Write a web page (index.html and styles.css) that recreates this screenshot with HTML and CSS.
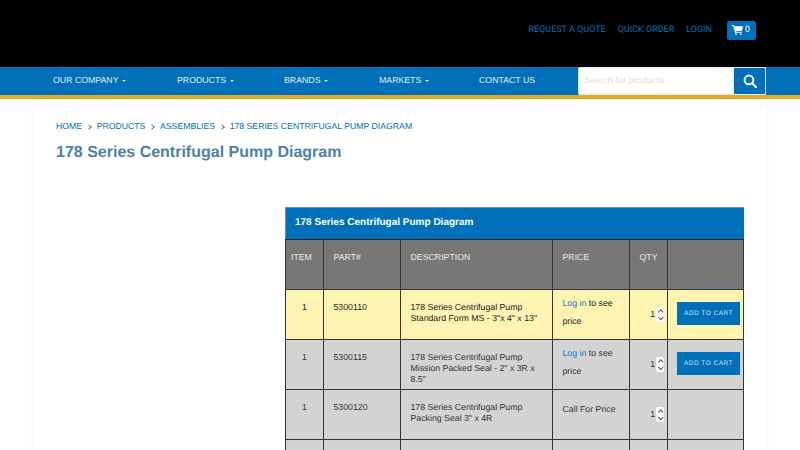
FILE: index.html
```html
<!DOCTYPE html>
<html lang="en">
<head>
<meta charset="utf-8">
<title>178 Series Centrifugal Pump Diagram</title>
<link rel="stylesheet" href="styles.css">
</head>
<body>
<header class="topbar">
  <a class="toplink" href="#">REQUEST A QUOTE</a>
  <a class="toplink" href="#">QUICK ORDER</a>
  <a class="toplink" href="#">LOGIN</a>
  <a class="cart" href="#">
    <svg class="cart-icon" viewBox="0 0 18 16" width="11" height="10"><path fill="#fff" d="M0 0h3.2l.6 2H18l-2 8H6l.4 1.6H16V13H5L2.2 1.6H0z"/><circle cx="6.6" cy="14.6" r="1.4" fill="#fff"/><circle cx="14.4" cy="14.6" r="1.4" fill="#fff"/></svg>
    <span>0</span>
  </a>
</header>
<nav class="mainnav">
  <ul class="menu">
    <li class="m1">OUR COMPANY <i class="caret"></i></li>
    <li class="m2">PRODUCTS <i class="caret"></i></li>
    <li class="m3">BRANDS <i class="caret"></i></li>
    <li class="m4">MARKETS <i class="caret"></i></li>
    <li class="m5">CONTACT US</li>
  </ul>
  <form class="search">
    <input class="search-input" type="text" placeholder="Search for products">
    <button class="search-btn" type="button" aria-label="Search">
      <svg viewBox="0 0 16 16" width="14" height="14"><circle cx="6.8" cy="6.8" r="5" fill="none" stroke="#fff" stroke-width="2.2"/><path d="M10.6 10.6l4.2 4.2" stroke="#fff" stroke-width="2.6" stroke-linecap="round"/></svg>
    </button>
  </form>
</nav>
<main class="card">
  <ol class="crumbs">
    <li><a href="#">HOME</a></li>
    <li class="sep"></li>
    <li><a href="#">PRODUCTS</a></li>
    <li class="sep"></li>
    <li><a href="#">ASSEMBLIES</a></li>
    <li class="sep"></li>
    <li><a href="#">178 SERIES CENTRIFUGAL PUMP DIAGRAM</a></li>
  </ol>
  <h1 class="title">178 Series Centrifugal Pump Diagram</h1>
  <table class="parts">
    <caption class="parts-cap">178 Series Centrifugal Pump Diagram</caption>
    <colgroup><col class="c1"><col class="c2"><col class="c3"><col class="c4"><col class="c5"><col class="c6"></colgroup>
    <thead>
      <tr><th class="th-item">ITEM</th><th>PART#</th><th>DESCRIPTION</th><th>PRICE</th><th>QTY</th><th></th></tr>
    </thead>
    <tbody>
      <tr class="hl">
        <td class="ctr">1</td><td>5300110</td><td>178 Series Centrifugal Pump Standard Form MS - 3"x 4" x 13"</td>
        <td class="price"><a href="#">Log in</a> to see price</td>
        <td class="qty"><span class="qwrap">1<span class="spin"><i class="up"></i><i class="dn"></i></span></span></td>
        <td class="act"><button class="add" type="button">ADD TO CART</button></td>
      </tr>
      <tr>
        <td class="ctr">1</td><td>5300115</td><td>178 Series Centrifugal Pump Mission Packed Seal - 2" x 3R x 8.5"</td>
        <td class="price"><a href="#">Log in</a> to see price</td>
        <td class="qty"><span class="qwrap">1<span class="spin"><i class="up"></i><i class="dn"></i></span></span></td>
        <td class="act"><button class="add" type="button">ADD TO CART</button></td>
      </tr>
      <tr>
        <td class="ctr">1</td><td>5300120</td><td>178 Series Centrifugal Pump Packing Seal 3" x 4R</td>
        <td class="price call">Call For Price</td>
        <td class="qty"><span class="qwrap">1<span class="spin"><i class="up"></i><i class="dn"></i></span></span></td>
        <td class="act"></td>
      </tr>
      <tr><td></td><td></td><td></td><td></td><td></td><td></td></tr>
    </tbody>
  </table>
</main>
</body>
</html>
```
FILE: styles.css
```css
* { box-sizing: border-box; }
html, body { margin: 0; padding: 0; height: 450px; overflow: hidden; background: #fff; }
body { font-family: "Liberation Sans", Arial, sans-serif; color: #222; text-rendering: geometricPrecision; }
a { text-decoration: none; }

.topbar { height: 67px; background: #000; display: flex; align-items: center; justify-content: flex-end; padding: 0 44px 7px 0; }
.toplink { font-family: Roboto, sans-serif; font-size: 9px; color: #0070ba; margin: 0 12px 0 0; }
.cart { margin-left: 3px; width: 29px; height: 19px; background: #0070ba; border-radius: 2px; color: #fff; display: flex; align-items: center; gap: 2px; padding-left: 5px; font-family: Roboto, sans-serif; font-size: 8.75px; }
.cart span { position: relative; top: -.5px; }

.mainnav { height: 32px; background: #0070ba; border-bottom: 4px solid #e5ac28; display: flex; }
.menu { list-style: none; margin: 0; padding: 0 0 2px; display: flex; height: 28px; align-items: center; width: 578px; font-size: 8.75px; color: #e4edf4; }
.m1 { margin-left: 53px; width: 124px; }
.m2 { width: 107px; }
.m3 { width: 95px; }
.m4 { width: 100px; }
.caret { display: inline-block; width: 0; height: 0; border-left: 2.5px solid transparent; border-right: 2.5px solid transparent; border-top: 2.5px solid #e4edf4; margin-left: 1.5px; vertical-align: middle; }

.search { display: flex; width: 188px; height: 28px; background: #fff; border-radius: 2px 0 0 2px; border: 1px solid #dfe8ef; }
.search-input { flex: 1; min-width: 0; border: 0; outline: 0; padding: 0 6px; font-family: Roboto, sans-serif; font-size: 9px; background: transparent; text-rendering: geometricPrecision; }
.search-input::placeholder { color: #e0e0e0; }
.search-btn { width: 32px; padding: 0; border: 0; border-left: 1px solid #dfe8ef; background: #0070ba; display: flex; align-items: center; justify-content: center; }

.card { width: 732px; height: 351px; margin: 0 auto; padding: 21px 22px 0; background: #fff; box-shadow: 0 0 6px rgba(0,0,0,.05); }
.crumbs { list-style: none; margin: 0; padding: 0; display: flex; align-items: center; font-size: 8.7px; line-height: 12px; }
.crumbs a { color: #0070ba; }
.sep { width: 14.6px; height: 12px; position: relative; }
.sep::after { content: ""; position: absolute; left: 4.5px; top: 4.5px; width: 3px; height: 3px; border-top: 1px solid #5d7f9c; border-right: 1px solid #5d7f9c; transform: rotate(45deg); }
.title { margin: 10px 0 0; font-size: 16px; line-height: 21px; font-weight: bold; color: #4f80aa; }

.parts { margin: 44px 0 0 229px; width: 459px; table-layout: fixed; border-collapse: collapse; font-size: 8.75px; border-left: 1px solid #999; }
.c1 { width: 38px; }
.c2 { width: 77px; }
.c3 { width: 152px; }
.c4 { width: 77px; }
.c5 { width: 38px; }
.c6 { width: 76px; }
.parts-cap { background: #0070ba; color: #fff; height: 32px; border-top: 1px solid #888; border-left: 1px solid #888; text-align: left; padding: 0 9px; font-size: 10px; line-height: 29px; font-weight: bold; }
.parts th { height: 50px; background: #777; color: #e8e8e8; font-weight: normal; font-size: 8.75px; text-align: left; vertical-align: top; padding: 12px 9.5px 0; border: 1px solid #333; border-top-color: #222; }
.parts th.th-item { padding: 12px 0 0 5px; }
.parts td { height: 50px; background: #d3d3d3; vertical-align: top; padding: 12px 9.5px 0; line-height: 10.75px; border: 1px solid #333; color: #333; }
.parts tr.hl td { background: #fdf4b2; color: #222; }
.parts td.ctr { text-align: center; padding-left: 0; padding-right: 0; }
.parts td.price { font-size: 8.75px; line-height: 17.5px; padding-top: 5px; }
.parts td.price.call { padding-top: 11px; }
.parts td.price a { color: #0f79bd; }
.parts td.qty { padding: 17px 3px 0 0; text-align: right; }
.qwrap { display: inline-flex; align-items: center; }
.spin { display: inline-flex; flex-direction: column; width: 8px; height: 15px; margin-left: 1px; }
.spin i { flex: 1; position: relative; background: #fff; border-radius: 2px; }
.spin i::after { content: ""; position: absolute; left: 2.7px; width: 2.5px; height: 2.5px; border-left: 1px solid #555; border-top: 1px solid #555; }
.spin .up::after { top: 3px; transform: rotate(45deg); }
.spin .dn::after { top: 1.5px; transform: rotate(225deg); }
.parts td.act { padding: 12px 3px 0 9px; }
.add { width: 63px; height: 23px; padding: 0; border: 0; background: #0070ba; color: #cfe0ee; font-family: "Liberation Sans", sans-serif; font-size: 6.5px; letter-spacing: .5px; text-rendering: geometricPrecision; }
```
